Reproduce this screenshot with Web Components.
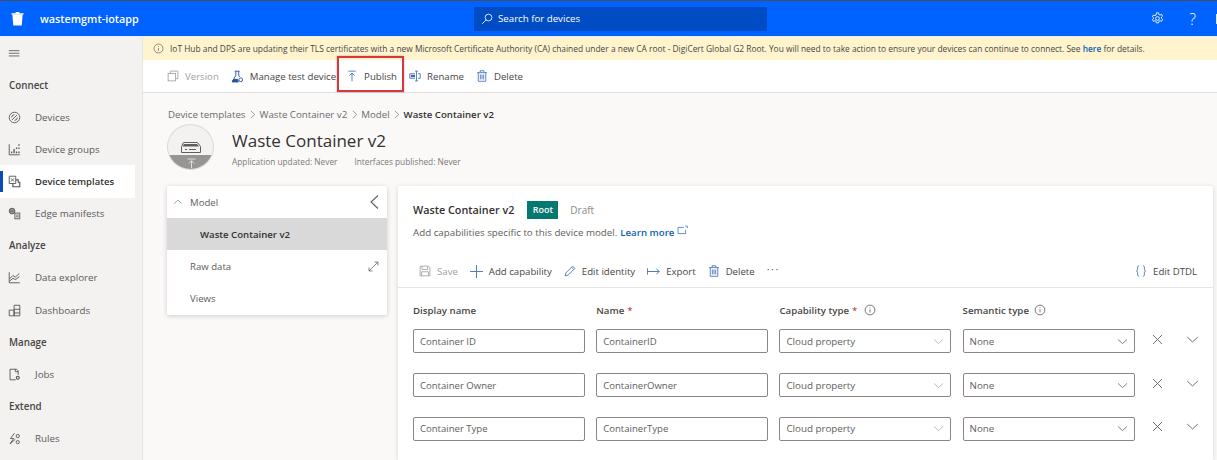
<!DOCTYPE html>
<html>
<head>
<meta charset="utf-8">
<style>
  html, body { margin: 0; padding: 0; height: 460px; overflow: hidden; }
  body { font-family: "Open Sans", "Liberation Sans", sans-serif; color: #323130; }
</style>
</head>
<body>
<iot-app></iot-app>
<script>
// icon paths, all on a 16 box
const ICONS = {
  search: '<circle cx="10" cy="6" r="4.5"/><path d="M6.7 9.3 1.5 14.5"/>',
  gear: '<circle cx="8" cy="8" r="2.3"/><path d="M6.7 1h2.6l.4 2 1.4.7 1.9-.8 1.3 2.2-1.5 1.3v1.6l1.5 1.3-1.3 2.2-1.9-.8-1.4.8-.4 1.9H6.7l-.4-1.9-1.4-.8-1.9.8-1.3-2.2 1.5-1.3V7.200L1.700 5.900 3 3.700l1.900.8 1.400-.8z"/>',
  info: '<circle cx="8" cy="8" r="6.5"/><path d="M8 7.200v4M8 4.500v1.200"/>',
  version: '<rect x="1.5" y="4.5" width="10" height="10"/><path d="M4.5 4.500v-3h10v10h-3"/>',
  flask: '<path d="M4.500 1.500h6M6 1.500v5L1.500 14.500h7.500M9.500 1.500v5l1 2"/><path d="M3 11.500h5l1 3H1.500z" fill="currentColor"/><circle cx="12" cy="12" r="2.300"/>',
  up: '<path d="M3 1.500h10M8 15V4M4.500 7.500 8 4l3.500 3.500"/>',
  rename: '<path d="M10 1.500v13M8 1.500h4M8 14.500h4"/><path d="M8 5H1v6h7M12 5h3v6h-3"/><rect x="2.500" y="6.500" width="5.500" height="3" fill="currentColor" stroke="none"/>',
  trash: '<path d="M3 3.500v11.500h10V3.500M1.500 3.500h13M5.500 3V1h5v2"/><path d="M5.800 6v6.500M8 6v6.500M10.200 6v6.500"/>',
  save: '<path d="M1.500 1.500h11l2 2v11h-13z"/><path d="M4 1.500v4.500h7.500V1.500M3.500 14.500V9h9v5.500"/>',
  plus: '<path d="M8 0v16M0 8h16"/>',
  pencil: '<path d="M1.500 14.500 2.500 10.500 11.500 1.500 14.500 4.500 5.500 13.500zM10 3l3 3"/>',
  export: '<path d="M.5 4v8M.5 8h14.500M11.500 4.500 15 8l-3.500 3.500"/>',
  braces: '<path d="M5.500 1c-2 0-2 1-2 3s0 3.500-1.500 4c1.500.5 1.500 2 1.500 4s0 3 2 3M10.500 1c2 0 2 1 2 3s0 3.500 1.500 4c-1.500.5-1.500 2-1.500 4s0 3-2 3"/>',
  x: '<path d="M2.500 2.500l11 11M13.500 2.500l-11 11"/>',
  down: '<path d="M1.500 5 8 11l6.500-6"/>',
  chevup: '<path d="M2 10.500 8 5l6 5.500"/>',
  back: '<path d="M11 1.500 4 8l7 6.500"/>',
  expand: '<path d="M1.500 14.500l13-13M9.500 1.500h5v5M1.500 9.500v5h5"/>',
  menu: '<path d="M1 4.500h13M1 7.700h13M1 11h13"/>',
  ext: '<path d="M10 3.500H1.500v9h11V7"/><path d="M12 1.500h3v3"/>',
  devices: '<circle cx="8" cy="8" r="6.500"/><path d="M5 11 11 5M8 4.500A3.500 3.500 0 0 0 4.500 8M8 11.500A3.500 3.500 0 0 0 11.500 8"/>',
  groups: '<path d="M1.500 1.500v13h13"/><path d="M4.500 12.500v-2M7.500 12.500V7.500M10.500 12.500v-2M13.500 12.500v-2M10.500 7.500V5.500M13.500 7.500V5.500M13.500 3.500v-2" stroke-width="1.600"/>',
  templates: '<path d="M1.500 1.500h8v9h-8z"/><path d="M3.500 4 7.500 8M7.500 4 3.500 8"/><path d="M9.500 6h3v3M12.500 9h2v5.500H6V10.500" stroke-width="1.400"/>',
  edge: '<circle cx="5" cy="5" r="3.500" fill="#9b9a98"/><path d="M3 5h4"/><rect x="8.500" y="7.500" width="6" height="7"/><path d="M10 10h3M10 12h3"/>',
  chart: '<path d="M1.500 1.500v13h13"/><path d="M2 9.500 6 5.500l3 2 5-4.500M2 12.500 6 9l3 1.500 5-3.500"/>',
  dash: '<path d="M1.500 7.500h6v7h-6zM7.500 11h7M7.500 1.500h7v13h-7zM7.500 6.500h7"/>',
  jobs: '<path d="M9.500 14.500h-7v-13h8l2 2v5"/><path d="M9 1.500v3h3.500"/><circle cx="12" cy="12" r="1.800" stroke-width="1.400"/>',
  rules: '<path d="M8 1.500 3 8h4l-4.500 6.500L9 9"/><circle cx="12" cy="5" r="2"/><circle cx="12" cy="12.500" r="2"/>',
  brand: '<path d="M2.500 3.500h11l-1 12h-9z" fill="#fff" stroke="none"/><path d="M1.500 2.500h13v1.300h-13zM6 1h4v1.500H6z" fill="#fff" stroke="none"/>',
};

function icon(name, size, color, extra) {
  const col = color || 'currentColor';
  return `<svg width="${size}" height="${size}" viewBox="0 0 16 16" fill="none" stroke="${col}" stroke-width="1.100" style="color:${col};flex:none;${extra || ''}">${ICONS[name]}</svg>`;
}

const BLUE = '#3b6cb7';

class IotHeader extends HTMLElement {
  constructor() {
    super();
    this.attachShadow({ mode: 'open' });
    this.shadowRoot.innerHTML = `
      <style>
        :host { display: grid; grid-template-columns: 474px 293px 1fr; align-items: center; height: 35px; background: #0063ff; border-top: 1px solid #4a4f57; border-bottom: 1px solid #e8eefc; color: #fff; }
        .brand { display: flex; align-items: center; gap: 15px; padding-left: 10px; font-size: 10.8px; font-weight: 600; }
        .search { display: flex; align-items: center; gap: 5px; height: 24px; padding-left: 7px; background: #004cc4; font-size: 9.7px; border-radius: 1px; }
        .tools { display: flex; justify-content: flex-end; align-items: center; }
        .q { font-size: 16px; font-weight: 300; line-height: 1; margin-left: 25px; margin-right: 20px; }
        .av { width: 1px; height: 10px; background: #dfe9ff; }
      </style>
      <div class="brand">${icon('brand', 15, 'none')}<span>wastemgmt-iotapp</span></div>
      <div class="search">${icon('search', 12, '#fff')}<span>Search for devices</span></div>
      <div class="tools">${icon('gear', 13, '#fff')}<span class="q">?</span><span class="av"></span></div>`;
  }
}
customElements.define('iot-header', IotHeader);

class NavItem extends HTMLElement {
  constructor() {
    super();
    this.attachShadow({ mode: 'open' });
  }
  connectedCallback() {
    const active = this.hasAttribute('active');
    this.shadowRoot.innerHTML = `
      <style>
        :host { display: flex; align-items: center; gap: 14px; height: 32.15px; width: 135px; padding-left: 8px; box-sizing: border-box; font-size: 9.8px; color: #5b5a58; position: relative; }
        :host([active]) { background: #fff; color: #323130; font-weight: 600; font-size: 9.5px; }
        .mark { position: absolute; left: 0; top: 6px; bottom: 6px; width: 3px; background: #0a4bb5; }
      </style>
      ${active ? '<span class="mark"></span>' : ''}
      ${icon(this.getAttribute('icon'), 13, '#555352')}
      <span><slot></slot></span>`;
  }
}
customElements.define('nav-item', NavItem);

class NavHead extends HTMLElement {
  constructor() {
    super();
    this.attachShadow({ mode: 'open' });
    this.shadowRoot.innerHTML = `
      <style>
        :host { display: flex; align-items: center; height: 32.15px; padding-left: 9px; font-size: 9.8px; font-weight: 600; color: #484644; }
      </style>
      <slot></slot>`;
  }
}
customElements.define('nav-head', NavHead);

class IotSidebar extends HTMLElement {
  constructor() {
    super();
    this.attachShadow({ mode: 'open' });
    this.shadowRoot.innerHTML = `
      <style>
        :host { display: block; width: 142px; flex: none; background: #f3f2f1; border-right: 1px solid #e6e5e4; overflow: hidden; }
        .burger { display: flex; align-items: center; height: 32px; padding-left: 8px; }
      </style>
      <div class="burger">${icon('menu', 13, '#605e5c')}</div>
      <slot></slot>`;
  }
}
customElements.define('iot-sidebar', IotSidebar);

class CmdBtn extends HTMLElement {
  constructor() {
    super();
    this.attachShadow({ mode: 'open' });
  }
  connectedCallback() {
    const off = this.hasAttribute('disabled');
    const col = off ? '#a19f9d' : (this.getAttribute('color') || BLUE);
    this.shadowRoot.innerHTML = `
      <style>
        :host { display: inline-flex; align-items: center; gap: 6px; font-size: 9.65px; color: ${off ? '#a19f9d' : '#484644'}; white-space: nowrap; }
      </style>
      ${icon(this.getAttribute('icon'), +this.getAttribute('size') || 12, col)}
      <span><slot></slot></span>`;
  }
}
customElements.define('cmd-btn', CmdBtn);

class IotBanner extends HTMLElement {
  constructor() {
    super();
    this.attachShadow({ mode: 'open' });
    this.shadowRoot.innerHTML = `
      <style>
        :host { display: flex; align-items: center; gap: 6px; height: 23px; padding-left: 10px; background: #fff4ce; font-size: 8.39px; color: #484644; white-space: nowrap; overflow: hidden; }
        a { color: #0f5fb0; font-weight: 600; text-decoration: none; }
      </style>
      ${icon('info', 11, '#6b6a68')}
      <span><slot></slot> <a>here</a> for details.</span>`;
  }
}
customElements.define('iot-banner', IotBanner);

class CmdBar extends HTMLElement {
  constructor() {
    super();
    this.attachShadow({ mode: 'open' });
    this.shadowRoot.innerHTML = `
      <style>
        :host { display: flex; align-items: center; height: 33px; padding-left: 24px; gap: 12px; background: #fff; border-bottom: 1px solid #e1dfdd; box-sizing: border-box; }
        .hl { position: relative; margin-left: -2px; }
        .hl::after { content: ""; position: absolute; left: -9px; right: -7px; top: -9px; bottom: -5px; border: 2px solid #d9373b; box-shadow: 0 0 2px rgba(0,0,0,.3); }
      </style>
      <cmd-btn icon="version" disabled>Version</cmd-btn>
      <cmd-btn icon="flask" color="#23509e" size="13">Manage test device</cmd-btn>
      <span class="hl"><cmd-btn icon="up">Publish</cmd-btn></span>
      <cmd-btn icon="rename">Rename</cmd-btn>
      <cmd-btn icon="trash">Delete</cmd-btn>`;
  }
}
customElements.define('cmd-bar', CmdBar);

class TemplateHead extends HTMLElement {
  constructor() {
    super();
    this.attachShadow({ mode: 'open' });
    this.shadowRoot.innerHTML = `
      <style>
        :host { display: block; padding: 14px 0 0 24px; }
        .crumbs { display: flex; align-items: center; gap: 2.5px; height: 14px; padding-left: 1px; font-size: 9.7px; color: #6b6a68; }
        .crumbs b { font-weight: 600; font-size: 9.65px; color: #323130; }
        .head { display: flex; gap: 18px; margin-top: 3px; height: 46px; }
        .disc { position: relative; width: 47px; height: 46px; border-radius: 50%; border: 1px solid #dcdad8; background: #f3f2f1; overflow: hidden; box-sizing: border-box; flex: none; }
        .disc .band { position: absolute; left: 0; right: 0; bottom: 0; height: 14px; background: #979593; }
        .disc svg { position: absolute; }
        h1 { margin: 5px 0 0; font-size: 17px; font-weight: 500; line-height: 24px; color: #323130; }
        .meta { display: flex; gap: 17px; font-size: 8.3px; color: #7a7876; margin-top: 3px; }
      </style>
      <div class="crumbs"><span>Device templates</span>${icon('back', 9, '#6b6a68', 'transform:scaleX(-1)')}<span>Waste Container v2</span>${icon('back', 9, '#6b6a68', 'transform:scaleX(-1)')}<span>Model</span>${icon('back', 9, '#6b6a68', 'transform:scaleX(-1)')}<b>Waste Container v2</b></div>
      <div class="head">
        <div class="disc">
          <span class="band"></span>
          <svg style="left:12px;top:16px" width="22" height="13" viewBox="0 0 22 13" fill="none" stroke="#605e5c"><path d="M3.500 1.500h14l3 4v6h-19v-6z"/><path d="M4 3h13l2 2.500H2.500z" fill="#605e5c" stroke="none"/><path d="M5 8.500h2M9 8.500h7"/></svg>
          <svg style="left:18px;top:33px" width="11" height="11" viewBox="0 0 16 16" fill="none" stroke="#fff"><path d="M2 1.500h12M8 15V4M4 8l4-4 4 4"/></svg>
        </div>
        <div>
          <h1>Waste Container v2</h1>
          <div class="meta"><span>Application updated: Never</span><span>Interfaces published: Never</span></div>
        </div>
      </div>`;
  }
}
customElements.define('template-head', TemplateHead);

class ModelTree extends HTMLElement {
  constructor() {
    super();
    this.attachShadow({ mode: 'open' });
    this.shadowRoot.innerHTML = `
      <style>
        :host { display: block; width: 220px; height: 129px; background: #fff; border-radius: 2px; box-shadow: 0 1px 5px rgba(0,0,0,.18); font-size: 9.6px; color: #5f5d5b; flex: none; }
        .row { display: flex; align-items: center; height: 32px; padding-left: 23px; box-sizing: border-box; justify-content: space-between; padding-right: 8px; }
        .top { padding-left: 6px; justify-content: flex-start; gap: 7px; position: relative; }
        .top .b { position: absolute; right: 4px; top: 8px; }
        .sel { background: #d9d9d9; color: #323130; font-weight: 600; padding-left: 33px; }
      </style>
      <div class="row top">${icon('chevup', 10, '#7a7876')}<span>Model</span><span class="b">${icon('back', 16, '#605e5c')}</span></div>
      <div class="row sel"><span>Waste Container v2</span></div>
      <div class="row"><span>Raw data</span>${icon('expand', 11, '#605e5c')}</div>
      <div class="row"><span>Views</span></div>`;
  }
}
customElements.define('model-tree', ModelTree);

class CapField extends HTMLElement {
  constructor() {
    super();
    this.attachShadow({ mode: 'open' });
  }
  connectedCallback() {
    const sel = this.getAttribute('select');
    this.shadowRoot.innerHTML = `
      <style>
        :host { display: flex; align-items: center; justify-content: space-between; height: 24px; box-sizing: border-box; padding: 0 6px; border: 1px solid #8a8886; border-radius: 2px; background: #fff; font-size: ${sel ? 9.8 : 9.55}px; color: #605e5c; white-space: nowrap; }
      </style>
      <span><slot></slot></span>
      ${sel ? icon('down', 11, sel) : ''}`;
  }
}
customElements.define('cap-field', CapField);

class CapRow extends HTMLElement {
  constructor() {
    super();
    this.attachShadow({ mode: 'open' });
  }
  connectedCallback() {
    this.shadowRoot.innerHTML = `
      <style>
        :host { display: grid; grid-template-columns: 172px 172px 172px 172px 1fr; column-gap: 11.2px; align-items: center; height: 43.8px; }
        .acts { display: flex; gap: 22px; padding-left: 5px; margin-top: -4px; }
      </style>
      <cap-field>${this.getAttribute('label')}</cap-field>
      <cap-field>${this.getAttribute('name')}</cap-field>
      <cap-field select="#a8a6a4">Cloud property</cap-field>
      <cap-field select="#605e5c">None</cap-field>
      <div class="acts">${icon('x', 13, '#605e5c')}${icon('down', 13, '#605e5c')}</div>`;
  }
}
customElements.define('cap-row', CapRow);

class CapEditor extends HTMLElement {
  constructor() {
    super();
    this.attachShadow({ mode: 'open' });
    this.shadowRoot.innerHTML = `
      <style>
        :host { display: block; flex: 1; background: #fff; border-radius: 2px 2px 0 0; box-shadow: 0 1px 5px rgba(0,0,0,.15); min-width: 0; }
        .title { display: flex; align-items: center; padding: 14px 0 0 15px; height: 19px; font-size: 10.8px; font-weight: 600; color: #323130; }
        .root { display: inline-flex; align-items: center; justify-content: center; width: 31px; height: 18px; margin-left: 13px; background: #05786f; color: #fff; font-size: 9px; font-weight: 600; }
        .draft { margin-left: 12px; font-size: 10px; font-weight: 400; color: #8a8886; }
        .sub { display: flex; align-items: center; padding: 6px 0 0 15px; height: 14px; font-size: 9.77px; color: #5f5d5b; }
        .sub a { color: #0f5fb0; font-weight: 600; font-size: 9.66px; margin-left: 3px; margin-right: 3px; }
        .sub svg { margin-top: -3px; }
        .tools { display: flex; align-items: center; gap: 12px; height: 32px; margin-top: 16px; padding-left: 21px; padding-right: 16px; border-bottom: 1px solid #e6e5e4; }
        .dots { color: #605e5c; font-size: 11px; letter-spacing: 1.5px; margin-top: -6px; }
        .end { margin-left: auto; }
        .labels { display: grid; grid-template-columns: 172px 172px 172px 172px; column-gap: 11.2px; padding: 14px 0 0 15px; height: 16px; font-size: 9.7px; font-weight: 600; color: #484644; }
        .labels span { display: flex; align-items: center; gap: 3px; }
        .labels i { color: #b3261e; font-style: normal; font-weight: 400; }
        .rows { padding-left: 15px; margin-top: 1.5px; }
      </style>
      <div class="title"><span>Waste Container v2</span><span class="root">Root</span><span class="draft">Draft</span></div>
      <div class="sub"><span>Add capabilities specific to this device model.</span><a>Learn more</a>${icon('ext', 11, BLUE)}</div>
      <div class="tools">
        <cmd-btn icon="save" disabled>Save</cmd-btn>
        <cmd-btn icon="plus" size="13">Add capability</cmd-btn>
        <cmd-btn icon="pencil">Edit identity</cmd-btn>
        <cmd-btn icon="export" size="13">Export</cmd-btn>
        <cmd-btn icon="trash">Delete</cmd-btn>
        <span class="dots">···</span>
        <span class="end"><cmd-btn icon="braces" size="12">Edit DTDL</cmd-btn></span>
      </div>
      <div class="labels">
        <span>Display name</span>
        <span>Name <i>*</i></span>
        <span>Capability type <i>*</i> ${icon('info', 12, '#605e5c', 'margin-left:4px')}</span>
        <span>Semantic type ${icon('info', 12, '#605e5c', 'margin-left:2px')}</span>
      </div>
      <div class="rows"><slot></slot></div>`;
  }
}
customElements.define('cap-editor', CapEditor);

class IotApp extends HTMLElement {
  constructor() {
    super();
    this.attachShadow({ mode: 'open' });
    this.shadowRoot.innerHTML = `
      <style>
        :host { display: flex; flex-direction: column; width: 1217px; height: 460px; overflow: hidden; background: #faf9f8; }
        .body { display: flex; flex: 1; min-height: 0; }
        .main { flex: 1; min-width: 0; display: flex; flex-direction: column; }
        .cols { display: flex; gap: 11px; padding: 16px 4px 0 24px; flex: 1; }
      </style>
      <iot-header></iot-header>
      <div class="body">
        <iot-sidebar>
          <nav-head>Connect</nav-head>
          <nav-item icon="devices">Devices</nav-item>
          <nav-item icon="groups">Device groups</nav-item>
          <nav-item icon="templates" active>Device templates</nav-item>
          <nav-item icon="edge">Edge manifests</nav-item>
          <nav-head>Analyze</nav-head>
          <nav-item icon="chart">Data explorer</nav-item>
          <nav-item icon="dash">Dashboards</nav-item>
          <nav-head>Manage</nav-head>
          <nav-item icon="jobs">Jobs</nav-item>
          <nav-head>Extend</nav-head>
          <nav-item icon="rules">Rules</nav-item>
        </iot-sidebar>
        <div class="main">
          <iot-banner>IoT Hub and DPS are updating their TLS certificates with a new Microsoft Certificate Authority (CA) chained under a new CA root - DigiCert Global G2 Root. You will need to take action to ensure your devices can continue to connect. See</iot-banner>
          <cmd-bar></cmd-bar>
          <template-head></template-head>
          <div class="cols">
            <model-tree></model-tree>
            <cap-editor>
              <cap-row label="Container ID" name="ContainerID"></cap-row>
              <cap-row label="Container Owner" name="ContainerOwner"></cap-row>
              <cap-row label="Container Type" name="ContainerType"></cap-row>
            </cap-editor>
          </div>
        </div>
      </div>`;
  }
}
customElements.define('iot-app', IotApp);
</script>
</body>
</html>
